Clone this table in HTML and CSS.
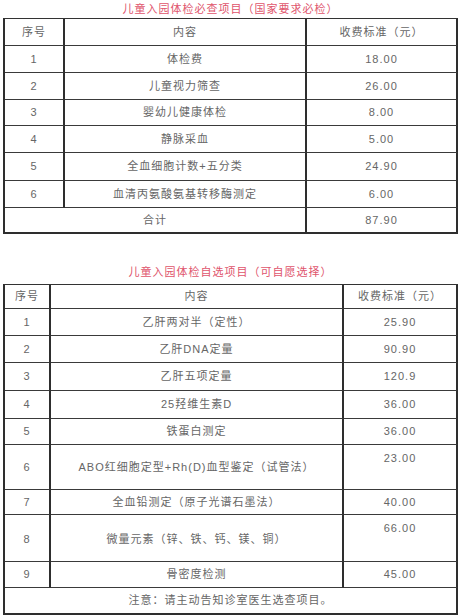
FILE: index.html
```html
<!DOCTYPE html>
<html lang="zh-CN">
<head>
<meta charset="utf-8">
<title>儿童入园体检项目</title>
<link rel="stylesheet" href="styles.css">
</head>
<body>
<div class="page">
  <p class="title title-first">儿童入园体检必查项目（国家要求必检）</p>
  <table class="fee fee-required">
    <colgroup><col class="c1"><col class="c2"><col class="c3"></colgroup>
    <tr><td>序号</td><td>内容</td><td>收费标准（元）</td></tr>
    <tr><td>1</td><td>体检费</td><td>18.00</td></tr>
    <tr><td>2</td><td>儿童视力筛查</td><td>26.00</td></tr>
    <tr class="r26"><td>3</td><td>婴幼儿健康体检</td><td>8.00</td></tr>
    <tr><td>4</td><td>静脉采血</td><td>5.00</td></tr>
    <tr class="r28"><td>5</td><td>全血细胞计数+五分类</td><td>24.90</td></tr>
    <tr><td>6</td><td>血清丙氨酸氨基转移酶测定</td><td>6.00</td></tr>
    <tr class="r25 last"><td colspan="2">合计</td><td>87.90</td></tr>
  </table>

  <p class="title title-second">儿童入园体检自选项目（可自愿选择）</p>
  <table class="fee fee-optional">
    <colgroup><col class="d1"><col class="d2"><col class="d3"></colgroup>
    <tr class="head"><td>序号</td><td>内容</td><td>收费标准（元）</td></tr>
    <tr><td>1</td><td>乙肝两对半（定性）</td><td>25.90</td></tr>
    <tr><td>2</td><td>乙肝DNA定量</td><td>90.90</td></tr>
    <tr class="r28"><td>3</td><td>乙肝五项定量</td><td>120.9</td></tr>
    <tr class="r28"><td>4</td><td>25羟维生素D</td><td>36.00</td></tr>
    <tr class="r26"><td>5</td><td>铁蛋白测定</td><td>36.00</td></tr>
    <tr class="tall"><td>6</td><td>ABO红细胞定型+Rh(D)血型鉴定（试管法）</td><td class="top">23.00</td></tr>
    <tr class="r25"><td>7</td><td>全血铅测定（原子光谱石墨法）</td><td>40.00</td></tr>
    <tr class="taller"><td>8</td><td>微量元素（锌、铁、钙、镁、铜）</td><td class="top">66.00</td></tr>
    <tr class="r26"><td>9</td><td>骨密度检测</td><td>45.00</td></tr>
    <tr class="r26 last"><td colspan="3">注意：请主动告知诊室医生选查项目。</td></tr>
  </table>
</div>
</body>
</html>
```

FILE: styles.css
```css
html, body {
  margin: 0;
  padding: 0;
  background: #ffffff;
}

.page {
  padding: 0 4px 0 3px;
  font-family: "Liberation Sans", "Noto Sans CJK SC", sans-serif;
  font-size: 11px;
  letter-spacing: 1px;
  color: #666666;
}

.title {
  margin: 0;
  text-align: center;
  color: #e0546c;
  font-size: 11px;
  line-height: 16px;
}

.title-first {
  padding-top: 1px;
  height: 17px;
}

.title-second {
  margin-top: 30px;
  height: 20px;
  line-height: 17px;
}

.fee {
  width: 100%;
  border-collapse: separate;
  border-spacing: 0;
  table-layout: fixed;
  border-top: 1px solid #333333;
  border-left: 2px solid #2e2e2e;
}

.fee td {
  border-bottom: 1px solid #3a3a3a;
  border-right: 2px solid #2e2e2e;
  text-align: center;
  vertical-align: middle;
  padding: 5px 0;
  line-height: 16px;
}

.fee .last td {
  border-bottom-width: 2px;
  border-bottom-color: #2e2e2e;
}

.c1 { width: 60px; }
.c3 { width: 151px; }
.d1 { width: 46px; }
.d3 { width: 114px; }

.fee .r28 td { padding: 5px 0 6px; }
.fee .r26 td { padding: 4px 0 5px; }
.fee .r25 td { padding: 4px 0 4px; }
.fee-optional .head td { padding: 3px 0 4px; }
.fee-optional .tall td { padding: 14px 0 14px; }
.fee-optional .taller td { padding: 16px 0 14px; }

.fee-optional td.top {
  vertical-align: top;
  padding-top: 5px;
}
```
